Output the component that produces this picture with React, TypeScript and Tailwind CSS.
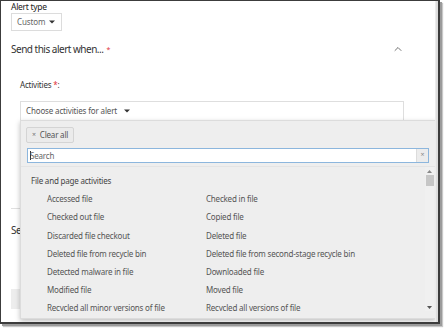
import { ChevronUp } from "lucide-react";

const rows: [string, string][] = [
  ["Accessed file", "Checked in file"],
  ["Checked out file", "Copied file"],
  ["Discarded file checkout", "Deleted file"],
  ["Deleted file from recycle bin", "Deleted file from second-stage recycle bin"],
  ["Detected malware in file", "Downloaded file"],
  ["Modified file", "Moved file"],
  ["Recycled all minor versions of file", "Recycled all versions of file"],
];

function Caret() {
  return (
    <svg width="6" height="4" viewBox="0 0 6 4" className="shrink-0">
      <path d="M0 0.5h6L3 3.5z" fill="#333" />
    </svg>
  );
}

function ActivityPanel() {
  return (
    <div className="absolute left-[19px] top-[119px] w-[416px] h-[199px] bg-[#eeeeee] border border-[#dcdcdc] shadow-[0_2px_5px_rgba(0,0,0,0.25)] flex flex-col text-[8px] tracking-[-0.2px]">
      <div className="px-[5px] pt-[6px]">
        <button className="flex items-center gap-[4px] h-[16px] px-[5px] bg-[#ebebeb] border border-[#d4d4d4] rounded-[2px] text-[#555]">
          <span className="text-[7px] text-[#777]">×</span>
          Clear all
        </button>
      </div>
      <div className="mx-[6px] mt-[5px] h-[15px] flex bg-white border border-[#8cb6dd]">
        <span className="flex-1 flex items-center pl-[2px] text-[#666]">
          <span className="w-px h-[9px] bg-[#333] mr-[-1px]" />
          Search
        </span>
        <span className="w-[12px] flex items-center justify-center bg-[#ececec] border-l border-[#dcdcdc] text-[7px] text-[#888]">
          ×
        </span>
      </div>
      <div className="mt-[3px] border-t border-[#e4e4e4]" />
      <div className="flex flex-1 min-h-0 mb-[7px]">
        <div className="flex-1 overflow-hidden pt-[5px] leading-[18.2px]">
          <div className="pl-[10px] text-[#444]">File and page activities</div>
          <div className="grid grid-cols-[159px_1fr] pl-[26px] text-[#555]">
            {rows.map(([a, b]) => (
              <div key={a} className="contents">
                <div className="whitespace-nowrap">{a}</div>
                <div className="whitespace-nowrap">{b}</div>
              </div>
            ))}
          </div>
        </div>
        <div className="w-[9px] mr-[1px] bg-[#f0f0f0] flex flex-col items-center pt-[3px] pb-[2px]">
          <svg width="5" height="3" viewBox="0 0 5 3">
            <path d="M2.5 0L5 3H0z" fill="#888" />
          </svg>
          <div className="mt-[2px] w-[8px] h-[11px] bg-[#c6c6c6]" />
          <div className="flex-1" />
          <svg width="5" height="3" viewBox="0 0 5 3">
            <path d="M0 0h5L2.5 3z" fill="#555" />
          </svg>
        </div>
      </div>
    </div>
  );
}

export default function App() {
  return (
    <div className="w-[444px] h-[328px] bg-white" style={{ fontFamily: '"Noto Sans", "Open Sans", sans-serif' }}>
      <div className="w-[440px] h-[324px] border-t border-l border-r-[2px] border-b-[2px] border-[#3c3c3c] shadow-[2px_2px_0_#9b9b9b,3px_3px_1px_#c8c8c8] flex">
        <div className="relative flex-1 h-full overflow-hidden">
          <div className="pl-[10px] pt-[1px]">
            <div className="text-[8.5px] leading-[10px] tracking-[-0.3px] text-[#222]">Alert type</div>
            <div className="mt-[1px] w-[51px] h-[18px] border border-[#dcdcdc] flex items-center justify-between pl-[5px] pr-[6px] text-[8px] tracking-[-0.1px] text-[#666]">
              Custom
              <Caret />
            </div>
            <div className="mt-[10px] flex items-center justify-between pr-[31px] h-[16px]">
              <span className="text-[10px] text-[#333] tracking-[-0.5px]">
                Send this alert when...
                <span className="text-[#e0303a] text-[7px] ml-[3px] align-[1px]">*</span>
              </span>
              <ChevronUp size={12} strokeWidth={1.5} color="#444" />
            </div>
            <div className="mt-[22px] pl-[9px] text-[8px] leading-[11px] tracking-[-0.2px] text-[#333]">
              Activities <span className="text-[#e0303a]">*</span>:
            </div>
            <div className="mt-[11px] ml-[9px] w-[384px] h-[20px] border border-[#dedede] flex items-center gap-[7px] px-[5px] text-[8px] tracking-[-0.15px] text-[#555]">
              Choose activities for alert
              <Caret />
            </div>
            <div className="mt-[87px] w-[9px] border-t border-[#e0e0e0]" />
            <div className="mt-[13px] text-[10px] leading-[16px] tracking-[-0.5px] text-[#333]">Send email notifications</div>
            <div className="mt-[51px] w-[60px] h-[20px] bg-[#ededed]" />
          </div>
          <ActivityPanel />
        </div>
        <div className="w-[3px] h-full bg-[#dedede] border-l border-[#ececec]" />
      </div>
    </div>
  );
}
